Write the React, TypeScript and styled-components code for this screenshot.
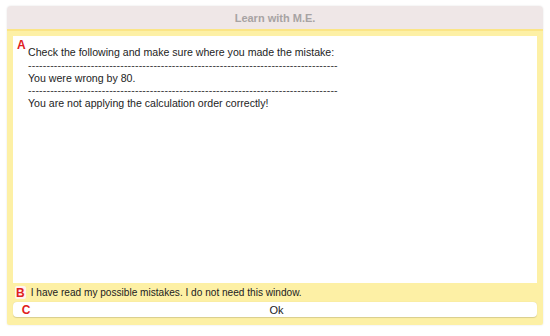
import styled, { createGlobalStyle } from "styled-components";

const GlobalStyle = createGlobalStyle`
    html, body {
        margin: 0;
        padding: 0;
        background: #ffffff;
        font-family: "Liberation Sans", Arial, sans-serif;
    }
`;

const Page = styled.div`
    width: 550px;
    height: 336px;
    padding: 6px 7px 11px 7px;
    box-sizing: border-box;
`;

const Window = styled.div`
    display: flex;
    flex-direction: column;
    height: 100%;
    border-radius: 4px 4px 2px 2px;
    overflow: hidden;
    box-shadow: 0 0 2px rgba(0, 0, 0, 0.12);
`;

const TitleBar = styled.div`
    height: 23px;
    display: flex;
    align-items: center;
    justify-content: center;
    background: #efe7e7;
    color: #a7a3a3;
    font-size: 11px;
    font-weight: bold;
`;

const Body = styled.div`
    flex: 1;
    display: flex;
    flex-direction: column;
    background: #fdf0a5;
    border-top: 2px solid #fbe586;
    padding: 5px 6px 8px 6px;
`;

const Panel = styled.div`
    position: relative;
    flex: 1;
    background: #ffffff;
    padding: 10px 15px;
    font-size: 10.6px;
    line-height: 12.8px;
    color: #1d1d1d;
`;

const Marker = styled.span`
    color: #e02020;
    font-weight: bold;
    font-size: 12px;
    line-height: 1;
`;

const CornerMarker = styled(Marker)`
    position: absolute;
    left: 4px;
    top: 3px;
`;

const Line = styled.div`
    white-space: nowrap;
`;

const Rule = styled(Line)`
    color: #3a3a3a;
    letter-spacing: 0.16px;
`;

const CheckRow = styled.div`
    display: flex;
    align-items: center;
    gap: 5px;
    height: 19px;
    padding-left: 2px;
    font-size: 10.1px;
    color: #222;
`;

const BadgeMarker = styled(Marker)`
    background: #fff4f0;
    border-radius: 2px;
    padding: 1px 1px 0 1px;
`;

const OkButton = styled.button`
    display: grid;
    grid-template-columns: 20px 1fr 20px;
    align-items: center;
    height: 15px;
    padding: 0 0 0 3px;
    border: none;
    border-radius: 4px;
    background: #ffffff;
    box-shadow: 0 0.5px 1px rgba(0, 0, 0, 0.15);
    font-family: inherit;
    font-size: 11px;
    color: #222;
`;

const ButtonLabel = styled.span`
    text-align: center;
`;

const dashes = "-".repeat(84);

export default function App() {
    return (
        <>
            <GlobalStyle />
            <Page>
                <Window>
                    <TitleBar>Learn with M.E.</TitleBar>
                    <Body>
                        <Panel>
                            <CornerMarker>A</CornerMarker>
                            <Line>Check the following and make sure where you made the mistake:</Line>
                            <Rule>{dashes}</Rule>
                            <Line>You were wrong by 80.</Line>
                            <Rule>{dashes}</Rule>
                            <Line>You are not applying the calculation order correctly!</Line>
                        </Panel>
                        <CheckRow>
                            <BadgeMarker>B</BadgeMarker>
                            <span>I have read my possible mistakes. I do not need this window.</span>
                        </CheckRow>
                        <OkButton>
                            <Marker>C</Marker>
                            <ButtonLabel>Ok</ButtonLabel>
                            <span />
                        </OkButton>
                    </Body>
                </Window>
            </Page>
        </>
    );
}
